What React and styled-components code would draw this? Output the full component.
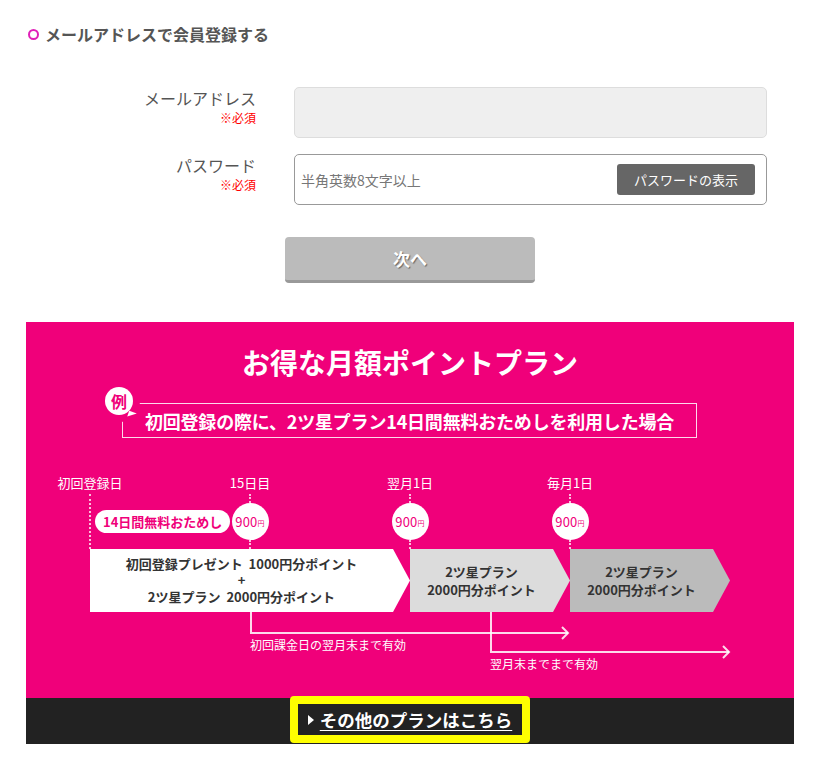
import styled, { createGlobalStyle } from "styled-components";

const GlobalStyle = createGlobalStyle`
  body {
    margin: 0;
    background: #fff;
    font-family: "Noto Sans CJK JP", "Noto Sans", sans-serif;
  }
`;

const PINK = "#f0007a";

const Page = styled.div`
  width: 768px;
  margin-left: 26px;
  color: #555;
`;

const Heading = styled.h2`
  margin: 0;
  padding: 24px 0 0 2px;
  display: flex;
  align-items: center;
  gap: 6px;
  font-size: 16px;
  line-height: 20px;
  font-weight: 700;
  color: #555;
`;

const Ring = styled.span`
  width: 11px;
  height: 11px;
  box-sizing: border-box;
  border: 2px solid #e020b8;
  border-radius: 50%;
`;

const Form = styled.form`
  margin-top: 43px;
  display: flex;
  flex-direction: column;
  gap: 16px;
`;

const FieldRow = styled.div`
  display: grid;
  grid-template-columns: 230px 473px;
  column-gap: 38px;
`;

const Label = styled.label`
  text-align: right;
  font-size: 16px;
  line-height: 22px;
  color: #555;
`;

const Required = styled.span`
  display: block;
  margin-top: 2px;
  font-size: 12px;
  line-height: 14px;
  color: #f00;
`;

const EmailInput = styled.input`
  height: 51px;
  box-sizing: border-box;
  border: 1px solid #ddd;
  border-radius: 5px;
  background: #efefef;
  outline: 0;
`;

const PasswordBox = styled.div`
  height: 51px;
  box-sizing: border-box;
  display: flex;
  align-items: center;
  gap: 8px;
  padding: 0 11px 0 6px;
  border: 1px solid #999;
  border-radius: 5px;
  background: #fff;
`;

const PasswordInput = styled.input`
  flex: 1;
  min-width: 0;
  border: 0;
  outline: 0;
  padding: 0;
  font-family: inherit;
  font-size: 14px;
  color: #333;

  &::placeholder {
    color: #777;
  }
`;

const ShowButton = styled.button`
  width: 138px;
  height: 31px;
  border: 0;
  border-radius: 3px;
  background: #666;
  color: #fff;
  font-family: inherit;
  font-size: 13px;
`;

const NextButton = styled.button`
  display: block;
  margin: 16px auto 0;
  width: 250px;
  height: 46px;
  box-sizing: border-box;
  border: 0;
  border-bottom: 3px solid #999;
  border-radius: 4px;
  background: #bbb;
  color: #fff;
  font-family: inherit;
  font-size: 17px;
  font-weight: 700;
  text-shadow: 1px 1px 1px rgba(0, 0, 0, 0.45);
`;

const PlanSection = styled.section`
  margin-top: 39px;
  height: 376px;
  box-sizing: border-box;
  padding-top: 20px;
  background: ${PINK};
  color: #fff;
`;

const PlanTitle = styled.h3`
  margin: 0;
  text-align: center;
  font-size: 28px;
  line-height: 40px;
  font-weight: 700;
`;

const ExampleBox = styled.div`
  position: relative;
  margin: 21px 0 0 96px;
  width: 575px;
  height: 35px;
  box-sizing: border-box;
  border: 1px solid rgba(255, 255, 255, 0.85);
  display: flex;
  align-items: center;
  justify-content: center;
  font-size: 18px;
  font-weight: 700;
  letter-spacing: -0.2px;
`;

const Bubble = styled.span`
  position: absolute;
  left: -18px;
  top: -17px;
  width: 28px;
  height: 28px;
  border-radius: 50%;
  background: #fff;
  box-shadow: 0 0 0 7px ${PINK};
  color: ${PINK};
  font-size: 16px;
  font-weight: 700;
  line-height: 28px;
  text-align: center;

  &::after {
    content: "";
    position: absolute;
    right: -3px;
    bottom: -3px;
    border-left: 8px solid #fff;
    border-bottom: 6px solid transparent;
    transform: rotate(20deg);
  }
`;

const Timeline = styled.div`
  margin-top: 36px;
`;

const MarkGrid = styled.div`
  display: grid;
  grid-template-columns: repeat(4, 120px);
  column-gap: 40px;
  padding-left: 4px;
`;

const DayLabel = styled.div`
  text-align: center;
  font-size: 13px;
  line-height: 18px;
`;

const MarkerRow = styled(MarkGrid)`
  margin-top: 2px;
  height: 55px;
`;

const Marker = styled.div`
  display: flex;
  flex-direction: column;
  align-items: center;
`;

const StartMarker = styled.div`
  display: flex;
  align-items: center;
  gap: 4px;
  padding-left: 59px;
`;

const Dots = styled.span`
  width: 0;
  height: ${(p) => p.$h}px;
  border-left: 2px dotted rgba(255, 255, 255, 0.75);
  align-self: ${(p) => (p.$full ? "stretch" : "center")};
`;

const Pill = styled.span`
  flex-shrink: 0;
  white-space: nowrap;
  height: 23px;
  padding: 0 8px;
  border-radius: 12px;
  background: #fff;
  color: ${PINK};
  font-size: 13px;
  font-weight: 700;
  line-height: 23px;
`;

const Coin = styled.span`
  width: 37px;
  height: 37px;
  border-radius: 50%;
  background: #fff;
  color: ${PINK};
  display: flex;
  align-items: center;
  justify-content: center;
  font-size: 13px;
  letter-spacing: 0.2px;

  small {
    font-size: 7px;
    margin-top: 2px;
  }
`;

const ChevronRow = styled.div`
  display: flex;
  margin-left: 64px;
`;

const Chevron = styled.div`
  width: ${(p) => p.$w}px;
  height: 63px;
  box-sizing: border-box;
  padding-right: 17px;
  background: ${(p) => p.$bg};
  clip-path: polygon(0 0, calc(100% - 17px) 0, 100% 50%, calc(100% - 17px) 100%, 0 100%);
  display: flex;
  flex-direction: column;
  align-items: center;
  justify-content: center;
  color: #333;
  font-size: 13px;
  font-weight: 700;
  line-height: ${(p) => p.$lh}px;
  white-space: pre;
  text-align: center;
`;

const ValidityArea = styled.div`
  position: relative;
  height: 86px;
`;

const Arrows = styled.svg`
  position: absolute;
  inset: 0;
`;

const Note = styled.div`
  position: relative;
  margin-left: ${(p) => p.$x}px;
  padding-top: ${(p) => p.$top}px;
  font-size: 12px;
  line-height: 16px;
`;

const LinkBar = styled.div`
  height: 46px;
  background: #222;
  display: flex;
  justify-content: center;
  align-items: flex-start;
`;

const PlanLink = styled.a`
  margin-top: -2px;
  width: 240px;
  height: 47px;
  box-sizing: border-box;
  border: 8px solid #ff0;
  border-radius: 4px;
  background: #222;
  display: flex;
  align-items: center;
  justify-content: center;
  gap: 6px;
  color: #fff;
  font-size: 17.5px;
  font-weight: 700;
  text-decoration: underline;
  text-underline-offset: 3px;
  cursor: pointer;
`;

const Caret = styled.span`
  width: 0;
  height: 0;
  border-left: 6px solid #fff;
  border-top: 5px solid transparent;
  border-bottom: 5px solid transparent;
`;

function Price() {
  return (
    <Coin>
      900<small>円</small>
    </Coin>
  );
}

export default function App() {
  return (
    <>
      <GlobalStyle />
      <Page>
        <Heading>
          <Ring />
          メールアドレスで会員登録する
        </Heading>

        <Form onSubmit={(e) => e.preventDefault()}>
          <FieldRow>
            <Label htmlFor="mail">
              メールアドレス
              <Required>※必須</Required>
            </Label>
            <EmailInput id="mail" type="email" />
          </FieldRow>
          <FieldRow>
            <Label htmlFor="pass">
              パスワード
              <Required>※必須</Required>
            </Label>
            <PasswordBox>
              <PasswordInput id="pass" type="password" placeholder="半角英数8文字以上" />
              <ShowButton type="button">パスワードの表示</ShowButton>
            </PasswordBox>
          </FieldRow>
          <NextButton type="submit">次へ</NextButton>
        </Form>

        <PlanSection>
          <PlanTitle>お得な月額ポイントプラン</PlanTitle>
          <ExampleBox>
            <Bubble>例</Bubble>
            初回登録の際に、2ツ星プラン14日間無料おためしを利用した場合
          </ExampleBox>

          <Timeline>
            <MarkGrid>
              <DayLabel>初回登録日</DayLabel>
              <DayLabel>15日目</DayLabel>
              <DayLabel>翌月1日</DayLabel>
              <DayLabel>毎月1日</DayLabel>
            </MarkGrid>
            <MarkerRow>
              <StartMarker>
                <Dots $full />
                <Pill>14日間無料おためし</Pill>
              </StartMarker>
              {[0, 1, 2].map((i) => (
                <Marker key={i}>
                  <Dots $h={9} />
                  <Price />
                  <Dots $h={9} />
                </Marker>
              ))}
            </MarkerRow>
            <ChevronRow>
              <Chevron $w={320} $bg="#fff" $lh={16.5}>
                {"初回登録プレゼント  1000円分ポイント\n+\n2ツ星プラン  2000円分ポイント"}
              </Chevron>
              <Chevron $w={160} $bg="#dcdcdc" $lh={18}>
                {"2ツ星プラン\n2000円分ポイント"}
              </Chevron>
              <Chevron $w={160} $bg="#bbb" $lh={18}>
                {"2ツ星プラン\n2000円分ポイント"}
              </Chevron>
            </ChevronRow>
            <ValidityArea>
              <Arrows width="768" height="86" viewBox="0 0 768 86">
                <g fill="none" stroke="rgba(255,255,255,0.85)" strokeWidth="2">
                  <path d="M225 0 V21 H542" />
                  <path d="M536 15 L542 21 L536 27" />
                  <path d="M465 0 V40 H703" />
                  <path d="M697 34 L703 40 L697 46" />
                </g>
              </Arrows>
              <Note $x={224} $top={25}>初回課金日の翌月末まで有効</Note>
              <Note $x={464} $top={3}>翌月末までまで有効</Note>
            </ValidityArea>
          </Timeline>
        </PlanSection>

        <LinkBar>
          <PlanLink>
            <Caret />
            その他のプランはこちら
          </PlanLink>
        </LinkBar>
      </Page>
    </>
  );
}
